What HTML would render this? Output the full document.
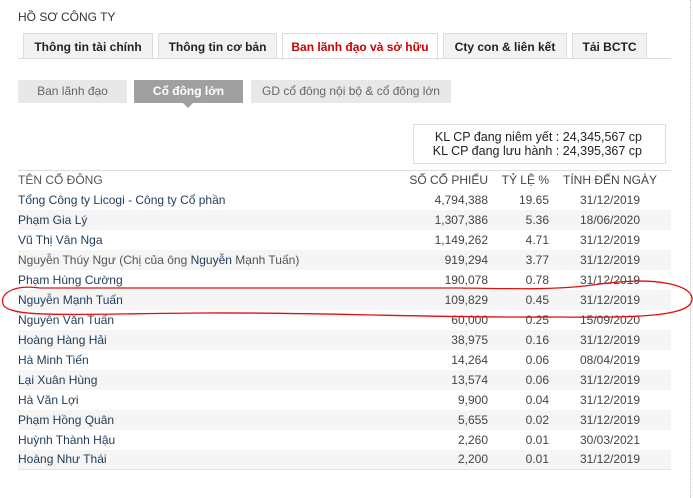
<!DOCTYPE html>
<html><head><meta charset="utf-8"><style>
*{margin:0;padding:0;box-sizing:border-box}
body{width:693px;height:498px;background:#fff;font-family:"Liberation Sans",Arial,sans-serif;font-size:12px;color:#333;position:relative;overflow:hidden}
.abs{position:absolute}
.title{left:18px;top:10px;font-size:12px;color:#333}
.tab{position:absolute;top:33px;height:26px;border:1px solid #ddd;border-bottom:none;background:#f2f2f2;font-weight:bold;font-size:12px;color:#222;text-align:center;line-height:26px}
.tab.act{background:#fff;color:#c00;height:27px}
.line{left:18px;width:653px;height:1px;background:#ddd}
.sub{position:absolute;top:80px;height:23px;line-height:23px;text-align:center;background:#e8e8e8;color:#666;font-size:12px}
.sub.act{background:#a0a0a0;color:#fff;font-weight:bold}
.kl{left:413px;top:124px;width:253px;height:40px;border:1px solid #ddd;text-align:right;padding:5px 23px 0 0;font-size:12.5px;color:#222;line-height:14px}
table{position:absolute;left:18px;top:170px;width:653px;border-collapse:collapse;border-top:1px solid #ddd;border-bottom:1px solid #e4e4e4}
td,th{height:20px;padding:0;font-weight:normal;font-size:12px;white-space:nowrap}
th{color:#555;height:19px;text-align:left}
td.n{color:#1f3b57}
td.r,th.r{text-align:right;color:#444}
td.c,th.c{text-align:center;color:#444}
tbody tr:nth-child(even){background:#f5f5f5}
.dot{left:690px;top:0;width:1px;height:498px;border-left:1px dotted #bbb}
</style></head><body>
<div class="abs title">HỒ SƠ CÔNG TY</div>
<div class="tab" style="left:23px;width:130px">Thông tin tài chính</div>
<div class="tab" style="left:158px;width:119px">Thông tin cơ bản</div>
<div class="tab act" style="left:282px;width:156px">Ban lãnh đạo và sở hữu</div>
<div class="tab" style="left:443px;width:124px">Cty con &amp; liên kết</div>
<div class="tab" style="left:572px;width:75px">Tải BCTC</div>
<div class="abs line" style="top:58px"></div>
<div class="sub" style="left:18px;width:109px">Ban lãnh đạo</div>
<div class="sub act" style="left:134px;width:109px">Cổ đông lớn</div>
<div class="abs" style="left:183px;top:103px;width:0;height:0;border-left:5px solid transparent;border-right:5px solid transparent;border-top:5px solid #a0a0a0"></div>
<div class="sub" style="left:251px;width:200px">GD cổ đông nội bộ &amp; cổ đông lớn</div>
<div class="abs kl">KL CP đang niêm yết : 24,345,567 cp<br>KL CP đang lưu hành : 24,395,367 cp</div>
<table>
<thead><tr><th>TÊN CỔ ĐÔNG</th><th class="r" style="width:110px">SỐ CỔ PHIẾU</th><th class="r" style="width:61px">TỶ LỆ %</th><th class="c" style="width:122px">TÍNH ĐẾN NGÀY</th></tr></thead>
<tbody>
<tr><td class="n">Tổng Công ty Licogi - Công ty Cổ phần</td><td class="r">4,794,388</td><td class="r">19.65</td><td class="c">31/12/2019</td></tr>
<tr><td class="n">Phạm Gia Lý</td><td class="r">1,307,386</td><td class="r">5.36</td><td class="c">18/06/2020</td></tr>
<tr><td class="n">Vũ Thị Vân Nga</td><td class="r">1,149,262</td><td class="r">4.71</td><td class="c">31/12/2019</td></tr>
<tr><td class="n" style="color:#555">Nguyễn Thúy Ngư (Chị của ông <span style="color:#1f3b57">Nguyễn</span> Mạnh Tuấn)</td><td class="r">919,294</td><td class="r">3.77</td><td class="c">31/12/2019</td></tr>
<tr><td class="n">Phạm Hùng Cường</td><td class="r">190,078</td><td class="r">0.78</td><td class="c">31/12/2019</td></tr>
<tr><td class="n">Nguyễn Mạnh Tuấn</td><td class="r">109,829</td><td class="r">0.45</td><td class="c">31/12/2019</td></tr>
<tr><td class="n">Nguyễn Văn Tuấn</td><td class="r">60,000</td><td class="r">0.25</td><td class="c">15/09/2020</td></tr>
<tr><td class="n">Hoàng Hàng Hải</td><td class="r">38,975</td><td class="r">0.16</td><td class="c">31/12/2019</td></tr>
<tr><td class="n">Hà Minh Tiến</td><td class="r">14,264</td><td class="r">0.06</td><td class="c">08/04/2019</td></tr>
<tr><td class="n">Lại Xuân Hùng</td><td class="r">13,574</td><td class="r">0.06</td><td class="c">31/12/2019</td></tr>
<tr><td class="n">Hà Văn Lợi</td><td class="r">9,900</td><td class="r">0.04</td><td class="c">31/12/2019</td></tr>
<tr><td class="n">Phạm Hồng Quân</td><td class="r">5,655</td><td class="r">0.02</td><td class="c">31/12/2019</td></tr>
<tr><td class="n">Huỳnh Thành Hậu</td><td class="r">2,260</td><td class="r">0.01</td><td class="c">30/03/2021</td></tr>
<tr><td class="n">Hoàng Như Thái</td><td class="r">2,200</td><td class="r">0.01</td><td class="c">31/12/2019</td></tr>
</tbody></table>
<div class="abs dot"></div>
<svg class="abs" style="left:0;top:0" width="693" height="498"><path d="M40 288 C10 284 -2 296 4 306 C14 318 80 314 200 313 C320 312 420 318 560 317 C640 318 690 316 692 300 C694 286 660 276 600 284 C560 290 520 289 460 288 C300 287 140 289 40 288 Z" fill="none" stroke="#e01010" stroke-width="1.3"/></svg>
</body></html>
